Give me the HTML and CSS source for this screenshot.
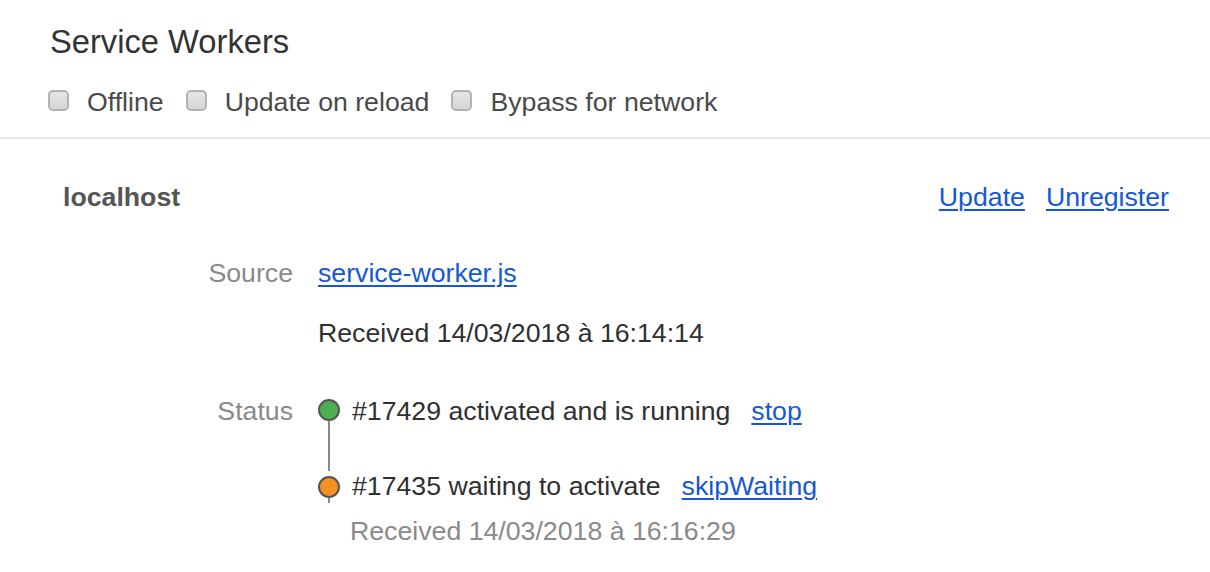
FILE: index.html
```html
<!DOCTYPE html>
<html>
<head>
<meta charset="utf-8">
<link rel="stylesheet" href="styles.css">
</head>
<body>
<header class="top">
  <h1 class="title">Service Workers</h1>
  <div class="options">
    <label class="opt"><span class="box"></span><span>Offline</span></label>
    <label class="opt"><span class="box"></span><span>Update on reload</span></label>
    <label class="opt"><span class="box"></span><span>Bypass for network</span></label>
  </div>
</header>
<section class="origin">
  <div class="origin-head">
    <div class="host">localhost</div>
    <div class="actions">
      <a class="link" href="#">Update</a>
      <a class="link" href="#">Unregister</a>
    </div>
  </div>
  <div class="field source">
    <div class="label">Source</div>
    <div class="value">
      <a class="link" href="#">service-worker.js</a>
      <div class="received">Received 14/03/2018 à 16:14:14</div>
    </div>
  </div>
  <div class="field status">
    <div class="label">Status</div>
    <div class="value timeline">
      <div class="entry first">
        <div class="rail"><span class="dot green"></span><span class="stem"></span></div>
        <div class="entry-text">
          <div class="line"><span>#17429 activated and is running</span><a class="link" href="#">stop</a></div>
        </div>
      </div>
      <div class="entry second">
        <div class="rail"><span class="dot orange"></span><span class="stem short"></span></div>
        <div class="entry-text">
          <div class="line"><span>#17435 waiting to activate</span><a class="link" href="#">skipWaiting</a></div>
          <div class="sub">Received 14/03/2018 à 16:16:29</div>
        </div>
      </div>
    </div>
  </div>
</section>
</body>
</html>
```

FILE: styles.css
```css
html, body {
  margin: 0;
  padding: 0;
  background: #fff;
}
body {
  font-family: "Liberation Sans", Arial, sans-serif;
  font-size: 26.7px;
  line-height: 30px;
  color: #303030;
}
.top {
  padding: 22px 0 0 50px;
  border-bottom: 2px solid #e6e6e6;
  box-sizing: border-box;
  height: 139px;
}
.title {
  margin: 0;
  font-size: 32.7px;
  line-height: 40px;
  font-weight: normal;
  color: #333;
}
.options {
  display: flex;
  align-items: center;
  margin-top: 25px;
  margin-left: -2px;
  color: #4a4a4a;
}
.opt {
  display: flex;
  align-items: center;
  margin-right: 22px;
}
.box {
  width: 17px;
  height: 17px;
  border: 2px solid #b3b3b3;
  border-radius: 5px;
  background: linear-gradient(#e6e6e6, #d6d6d6);
  margin-right: 18px;
  margin-top: -4px;
}
.origin {
  padding: 43px 41px 0 63px;
}
.origin-head {
  display: flex;
  justify-content: space-between;
}
.host {
  font-weight: bold;
  color: #555;
}
.actions {
  display: flex;
  gap: 21px;
}
.link {
  color: #1558d6;
  text-decoration: underline;
  text-decoration-thickness: 2px;
  text-underline-offset: 3px;
}
.field {
  display: grid;
  grid-template-columns: 230px 1fr;
  column-gap: 25px;
}
.label {
  text-align: right;
  color: #8a8a8a;
}
.source {
  margin-top: 46px;
}
.received {
  margin-top: 30px;
}
.status {
  margin-top: 48px;
}
.entry {
  display: grid;
  grid-template-columns: 22px 1fr;
  column-gap: 10px;
}
.entry.first .entry-text {
  padding-bottom: 45px;
}
.rail {
  display: flex;
  flex-direction: column;
  align-items: center;
}
.dot {
  box-sizing: border-box;
  width: 22px;
  height: 22px;
  border-radius: 50%;
  border: 2px solid #555;
  margin-top: 3px;
  flex: none;
}
.entry.second .dot {
  margin-top: 5px;
}
.green {
  background: #4caf50;
}
.orange {
  background: #f39122;
}
.stem {
  width: 2px;
  background: #888;
  flex: 1;
}
.stem.short {
  flex: none;
  height: 5px;
}
.line {
  display: flex;
  gap: 21px;
  padding-left: 2px;
}
.sub {
  margin-top: 15px;
  color: #8a8a8a;
}
```
